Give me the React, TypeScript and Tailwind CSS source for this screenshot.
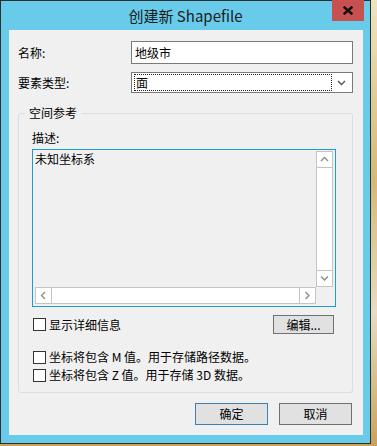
import React from "react";

function Chevron({ dir }: { dir: "up" | "down" | "left" | "right" }) {
  const paths: Record<string, string> = {
    up: "M1 5 L4.5 1.5 L8 5",
    down: "M1 1.5 L4.5 5 L8 1.5",
    left: "M5 1 L1.5 4.5 L5 8",
    right: "M1.5 1 L5 4.5 L1.5 8",
  };
  const horiz = dir === "up" || dir === "down";
  return (
    <svg
      width={horiz ? 9 : 7}
      height={horiz ? 7 : 9}
      viewBox={horiz ? "0 0 9 7" : "0 0 7 9"}
      fill="none"
      stroke="#8a8a8a"
      strokeWidth="1.3"
    >
      <path d={paths[dir]} />
    </svg>
  );
}

function Check({ label }: { label: React.ReactNode }) {
  return (
    <div className="flex items-center h-[18px]">
      <div className="w-[13px] h-[13px] border border-[#333333] bg-white" />
      <span className="ml-[3px] whitespace-nowrap">{label}</span>
    </div>
  );
}

export default function App() {
  return (
    <div className="w-[377px] h-[446px] bg-[linear-gradient(180deg,#efe4c0,#d6b874_40%,#e7dcc0_70%,#c9a35a)] font-['Noto_Sans_CJK_SC',sans-serif] text-[12px] leading-[16px] text-black">
      <div className="w-[371px] h-[444px] border border-[#2e2e2e] bg-[#68cbea] flex flex-col">
        {/* title bar */}
        <div className="h-[29px] relative flex items-center justify-center">
          <span className="text-[15px] leading-[18px] text-[#1b1b1b] pt-[1px]">创建新 Shapefile</span>
          <div className="absolute top-[-1px] right-[6px] w-[32px] h-[21px] bg-[#c75050] flex items-center justify-center">
            <svg width="10" height="9" viewBox="0 0 10 9" stroke="#111" strokeWidth="2.4" strokeLinecap="square">
              <path d="M1.5 1.5 L8.5 7.5 M8.5 1.5 L1.5 7.5" />
            </svg>
          </div>
        </div>

        {/* client */}
        <div className="ml-[8px] w-[354px] h-[405px] bg-[#f0f0f0] flex flex-col pl-[9px] pr-[10px] pt-[11px]">
          <div className="flex items-center h-[23px]">
            <span className="w-[113px]">名称:</span>
            <div className="w-[222px] h-[23px] border border-[#7a7a7a] bg-white flex items-center pl-[3px]">
              地级市
            </div>
          </div>
          <div className="flex items-center h-[21px] mt-[8px]">
            <span className="w-[113px]">要素类型:</span>
            <div className="w-[222px] h-[21px] border border-[#7a7a7a] bg-white flex items-stretch p-[1px] pl-[2px]">
              <div className="flex-1 border border-dotted border-[#222] flex items-center pl-[1px]">面</div>
              <div className="w-[19px] flex items-center justify-center">
                <svg width="9" height="6" viewBox="0 0 9 6" fill="none" stroke="#555" strokeWidth="1.4">
                  <path d="M1 1 L4.5 4.5 L8 1" />
                </svg>
              </div>
            </div>
          </div>

          <fieldset className="mt-[12px] w-[335px] border border-[#d5dfe5] rounded-[3px] p-0 m-0">
            <legend className="ml-[6px] px-[4px]">空间参考</legend>
            <div className="px-[13px] pt-[9px] pb-[8px] flex flex-col">
              <span>描述:</span>
              <div className="mt-[3px] w-[304px] h-[158px] border border-[#1e9ad6] flex flex-col pl-[1px] pt-[1px] pr-[2px] pb-[2px]">
                <div className="flex flex-1">
                  <div className="flex-1 pl-[1px]">未知坐标系</div>
                  <div className="w-[17px] border border-[#c4c4c4] bg-white flex flex-col">
                    <div className="h-[16px] border-b border-[#c4c4c4] flex items-center justify-center">
                      <Chevron dir="up" />
                    </div>
                    <div className="flex-1" />
                    <div className="h-[16px] border-t border-[#c4c4c4] flex items-center justify-center">
                      <Chevron dir="down" />
                    </div>
                  </div>
                </div>
                <div className="flex h-[17px] ml-[1px]">
                  <div className="flex-1 border border-[#c4c4c4] bg-white flex">
                    <div className="w-[16px] border-r border-[#c4c4c4] flex items-center justify-center">
                      <Chevron dir="left" />
                    </div>
                    <div className="flex-1" />
                    <div className="w-[16px] border-l border-[#c4c4c4] flex items-center justify-center">
                      <Chevron dir="right" />
                    </div>
                  </div>
                  <div className="w-[17px]" />
                </div>
              </div>

              <div className="mt-[8px] w-[304px] flex items-center justify-between pl-[1px] pr-[2px]">
                <Check label="显示详细信息" />
                <div className="w-[61px] h-[19px] border border-[#707070] bg-[#e1e1e1] flex items-center justify-center">
                  编辑...
                </div>
              </div>

              <div className="mt-[14px] pl-[1px] flex flex-col">
                <Check label="坐标将包含 M 值。用于存储路径数据。" />
                <Check label="坐标将包含 Z 值。用于存储 3D 数据。" />
              </div>
            </div>
          </fieldset>

          <div className="mt-[10px] flex justify-end gap-[11px] pr-[1px]">
            <div className="w-[73px] h-[22px] border border-[#3c7fb1] bg-[#e1e1e1] flex items-center justify-center">
              确定
            </div>
            <div className="w-[73px] h-[22px] border border-[#707070] bg-[#e1e1e1] flex items-center justify-center">
              取消
            </div>
          </div>
        </div>
      </div>
    </div>
  );
}
